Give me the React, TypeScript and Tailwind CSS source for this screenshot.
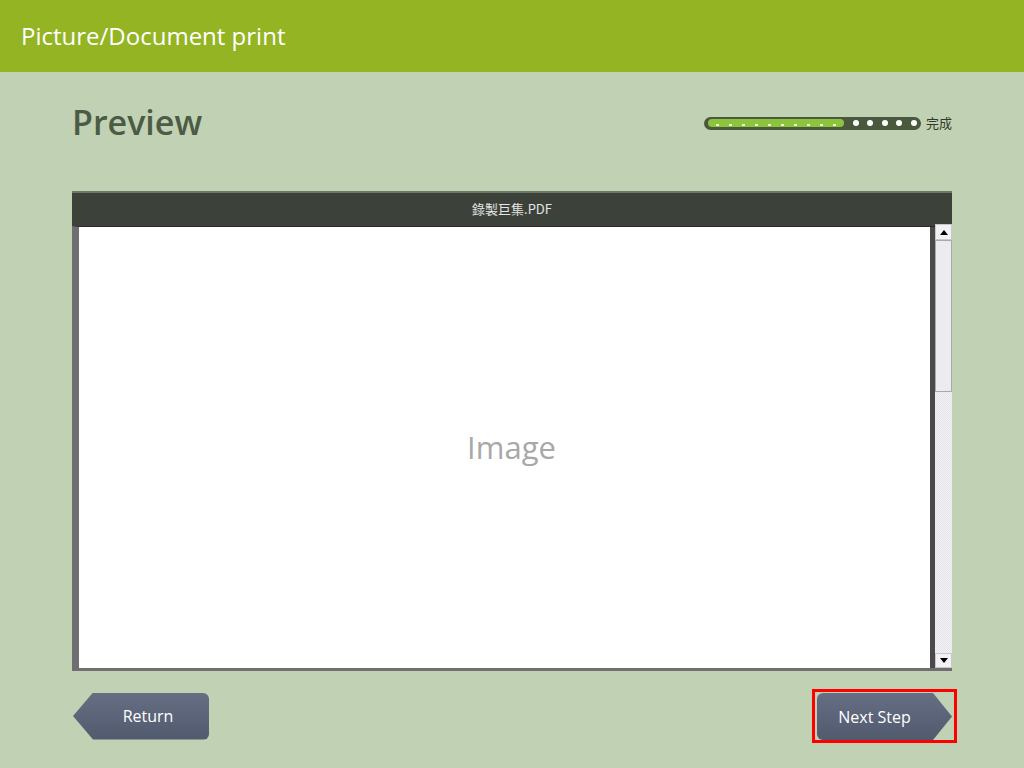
import React from "react";

const font = { fontFamily: '"Open Sans", "Noto Sans CJK TC", sans-serif' };

function Progress() {
  const dots = [0, 1, 2, 3, 4];
  const dashes = [0, 1, 2, 3, 4, 5, 6, 7, 8, 9];
  return (
    <div className="flex items-center gap-[5px]">
      <div className="flex h-[13px] w-[217px] items-center rounded-full bg-[#4a583d] px-[4px]">
        <div className="flex h-[8px] w-[137px] items-center justify-around rounded-full bg-[#8cc43c] px-[3px]">
          {dashes.map((d) => (
            <span key={d} className="mt-[3px] h-[2px] w-[3px] bg-[#e8f5d0]" />
          ))}
        </div>
        <div className="ml-[9px] flex items-center gap-[8.5px]">
          {dots.map((d) => (
            <span key={d} className="h-[6px] w-[6px] rounded-full bg-white" />
          ))}
        </div>
      </div>
      <span className="text-[13px] leading-none text-[#2f3a2a]">完成</span>
    </div>
  );
}

function Scrollbar() {
  return (
    <div className="flex w-[17px] flex-col bg-[repeating-conic-gradient(#f4f4f6_0%_25%,#e4e4e8_0%_50%)] bg-[length:2px_2px]">
      <div className="-mt-[3px] flex h-[16px] items-center justify-center border border-[#c8c8cc] bg-[#f2f2f4]">
        <svg width="8" height="5" viewBox="0 0 8 5">
          <polygon points="0,5 8,5 4,0" fill="#000" />
        </svg>
      </div>
      <div className="h-[152px] border border-[#a8a8ae] bg-[#ececf0]" />
      <div className="flex-1" />
      <div className="flex h-[15px] items-center justify-center border border-[#c8c8cc] bg-[#f2f2f4]">
        <svg width="8" height="5" viewBox="0 0 8 5">
          <polygon points="0,0 8,0 4,5" fill="#000" />
        </svg>
      </div>
    </div>
  );
}

export default function App() {
  return (
    <div className="flex h-[768px] w-[1024px] flex-col bg-[#c1d1b3]" style={font}>
      <div className="flex h-[72px] items-center bg-[#94b424] px-[21px]">
        <span className="text-[24px] text-white">Picture/Document print</span>
      </div>
      <div className="flex flex-col px-[72px]">
        <div className="mt-[28px] flex h-[44px] items-center justify-between">
          <span className="text-[34px] font-semibold leading-none text-[#4c5b45]">Preview</span>
          <div className="pt-[2px]">
            <Progress />
          </div>
        </div>
        <div className="mt-[47px] flex h-[480px] w-[880px] flex-col">
          <div className="flex h-[35px] items-center justify-center border-t-[2px] border-[#6e7869] bg-[#3c4239] pb-[2px]">
            <span className="text-[13px] text-[#e4e4e4]" style={{ fontFamily: '"Noto Sans CJK TC", "Open Sans", sans-serif' }}>
              錄製巨集.PDF
            </span>
          </div>
          <div className="flex flex-1 bg-[#3c4239]">
            <div className="flex flex-1 border-b-[3px] border-l-[7px] border-[#6f6f72] border-t border-t-[#2a2a2a]">
              <div className="flex flex-1 items-center justify-center bg-white pl-[14px]">
                <span className="text-[31px] text-[#a8a8a8]">Image</span>
              </div>
              <div className="w-[5px] bg-[#4a4a4a]" />
              <Scrollbar />
            </div>
          </div>
        </div>
        <div className="mt-[18px] flex items-center justify-between">
          <button className="ml-[1px] flex h-[47px] w-[136px] items-center justify-center rounded-r-[6px] bg-linear-to-b from-[#666e84] to-[#525a6e] pl-[14px] text-[16px] text-white [clip-path:polygon(20px_0,100%_0,100%_100%,20px_100%,0_50%)]">
            Return
          </button>
          <div className="-mr-[5px] border-[3px] border-[#ff0000] pb-0 pl-[2px] pr-[2px] pt-[1px]">
            <button className="flex h-[47px] w-[135px] items-center justify-center rounded-l-[6px] bg-linear-to-b from-[#666e84] to-[#525a6e] pr-[20px] text-[16px] text-white [clip-path:polygon(0_0,calc(100%-19px)_0,100%_50%,calc(100%-19px)_100%,0_100%)]">
              Next Step
            </button>
          </div>
        </div>
      </div>
    </div>
  );
}
